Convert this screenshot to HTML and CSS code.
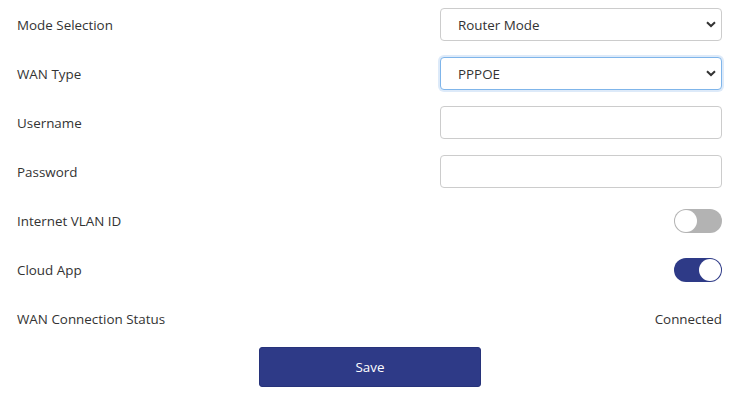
FILE: index.html
```html
<!DOCTYPE html>
<html>
<head>
<meta charset="utf-8">
<link rel="stylesheet" href="styles.css">
</head>
<body>
<form class="form">
  <div class="row">
    <span class="label">Mode Selection</span>
    <div class="select-wrap">
      <select class="select"><option>Router Mode</option></select>
      <svg class="chev" width="10" height="7" viewBox="0 0 10 7"><path d="M1 1.2 L5 5 L9 1.2" fill="none" stroke="#333" stroke-width="2"/></svg>
    </div>
  </div>
  <div class="row">
    <span class="label">WAN Type</span>
    <div class="select-wrap">
      <select class="select focus"><option>PPPOE</option></select>
      <svg class="chev" width="10" height="7" viewBox="0 0 10 7"><path d="M1 1.2 L5 5 L9 1.2" fill="none" stroke="#333" stroke-width="2"/></svg>
    </div>
  </div>
  <div class="row">
    <span class="label">Username</span>
    <input class="input" type="text">
  </div>
  <div class="row">
    <span class="label">Password</span>
    <input class="input" type="password">
  </div>
  <div class="row">
    <span class="label">Internet VLAN ID</span>
    <span class="toggle"><span class="knob"></span></span>
  </div>
  <div class="row">
    <span class="label">Cloud App</span>
    <span class="toggle on"><span class="knob"></span></span>
  </div>
  <div class="row">
    <span class="label">WAN Connection Status</span>
    <span class="status">Connected</span>
  </div>
  <div class="actions">
    <button type="button" class="save">Save</button>
  </div>
</form>
</body>
</html>
```
FILE: styles.css
```css
html, body {
  margin: 0;
  padding: 0;
  background: #fff;
}
body {
  font-family: "Open Sans", "Noto Sans", sans-serif;
  font-size: 13.4px;
  color: #333;
}
.form {
  padding: 0 20px 0 17px;
  display: flex;
  flex-direction: column;
}
.row {
  height: 49px;
  display: flex;
  align-items: center;
  justify-content: space-between;
}
.label {
  color: #333;
}
.select-wrap {
  position: relative;
  width: 282px;
  height: 33px;
}
.select {
  appearance: none;
  -webkit-appearance: none;
  width: 100%;
  height: 100%;
  box-sizing: border-box;
  border: 1px solid #cccccc;
  border-radius: 4px;
  background: #fff;
  padding: 0 0 0 17px;
  font-family: inherit;
  font-size: 13.4px;
  color: #333;
  outline: none;
}
.select.focus {
  border-color: #7fb5ea;
  box-shadow: 0 0 0 2px rgba(120, 170, 230, 0.25);
}
.chev {
  position: absolute;
  right: 6px;
  top: 13px;
  pointer-events: none;
}
.input {
  width: 282px;
  height: 33px;
  box-sizing: border-box;
  border: 1px solid #cccccc;
  border-radius: 4px;
  background: #fff;
  outline: none;
  padding: 0 12px;
}
.toggle {
  width: 48px;
  height: 24px;
  box-sizing: border-box;
  border-radius: 12px;
  background: #b3b3b3;
  display: flex;
  align-items: center;
  padding: 0 2px 0 1px;
  justify-content: flex-start;
}
.toggle .knob {
  width: 22px;
  height: 22px;
  border-radius: 50%;
  background: #fff;
}
.toggle.on {
  background: #2e3a87;
  justify-content: flex-end;
  padding: 0 1px 0 2px;
}
.status {
  color: #333;
}
.actions {
  display: flex;
  justify-content: center;
  padding-top: 4px;
  padding-left: 1px;
}
.save {
  width: 222px;
  height: 40px;
  border: 1px solid #27337a;
  border-radius: 3px;
  background: #2e3a87;
  color: #fff;
  font-family: inherit;
  font-size: 13.4px;
  cursor: pointer;
}
```
